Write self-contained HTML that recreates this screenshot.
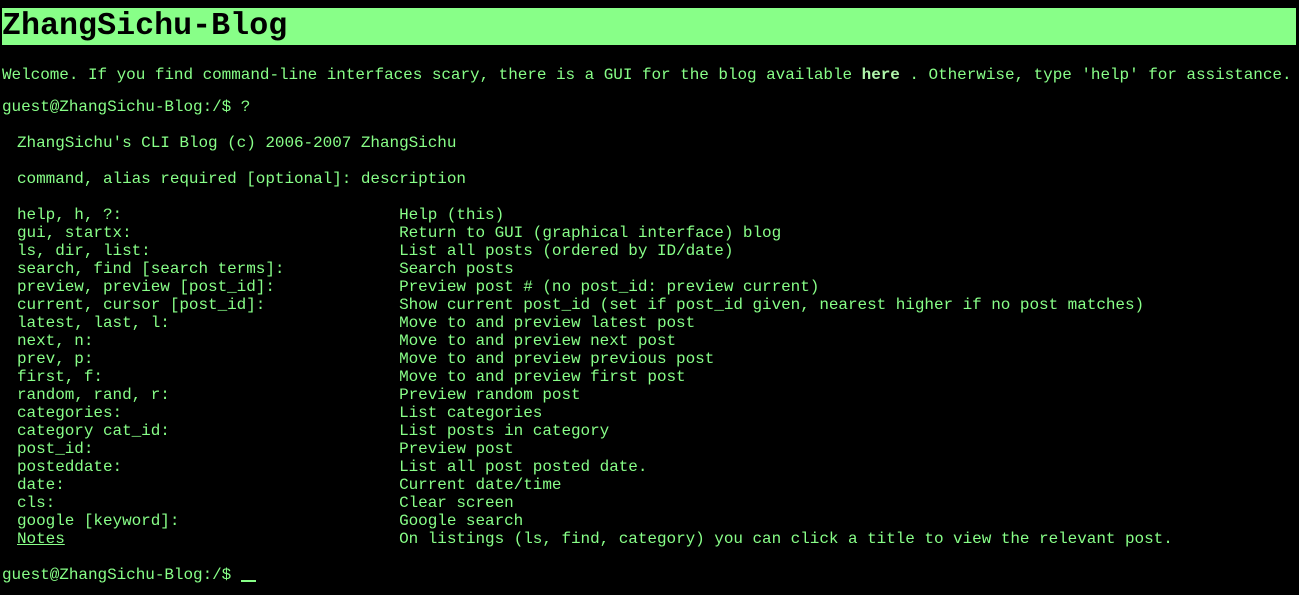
<!DOCTYPE html>
<html><head><style>
body{margin:0;background:#000;width:1299px;height:595px;overflow:hidden;font-family:"Liberation Mono",monospace;font-size:16px;letter-spacing:-0.05px;color:#8f8;}
.h{position:absolute;left:2px;top:8px;width:1294px;height:37px;background:#8f8;color:#000;font-weight:bold;font-size:31.7px;line-height:37px;letter-spacing:0}
.l{position:absolute;left:2px;white-space:pre;line-height:18px;}
.i{left:17px}
b{color:#aff5aa}
u{text-decoration:underline}
.c{display:inline-block;width:15px;height:2px;background:#8f8;vertical-align:-3px}
</style></head><body>
<div class="h">ZhangSichu-Blog</div>
<div class="l" style="top:66px">Welcome. If you find command-line interfaces scary, there is a GUI for the blog available <b>here</b> . Otherwise, type 'help' for assistance.</div>
<div class="l" style="top:98px">guest@ZhangSichu-Blog:/$ ?</div>
<div class="l i" style="top:134px">ZhangSichu's CLI Blog (c) 2006-2007 ZhangSichu</div>
<div class="l i" style="top:170px">command, alias required [optional]: description</div>
<div class="l i" style="top:206px">help, h, ?:                             Help (this)
gui, startx:                            Return to GUI (graphical interface) blog
ls, dir, list:                          List all posts (ordered by ID/date)
search, find [search terms]:            Search posts
preview, preview [post_id]:             Preview post # (no post_id: preview current)
current, cursor [post_id]:              Show current post_id (set if post_id given, nearest higher if no post matches)
latest, last, l:                        Move to and preview latest post
next, n:                                Move to and preview next post
prev, p:                                Move to and preview previous post
first, f:                               Move to and preview first post
random, rand, r:                        Preview random post
categories:                             List categories
category cat_id:                        List posts in category
post_id:                                Preview post
posteddate:                             List all post posted date.
date:                                   Current date/time
cls:                                    Clear screen
google [keyword]:                       Google search
<u>Notes</u>                                   On listings (ls, find, category) you can click a title to view the relevant post.</div>
<div class="l" style="top:566px">guest@ZhangSichu-Blog:/$ <span class="c"></span></div>
</body></html>
